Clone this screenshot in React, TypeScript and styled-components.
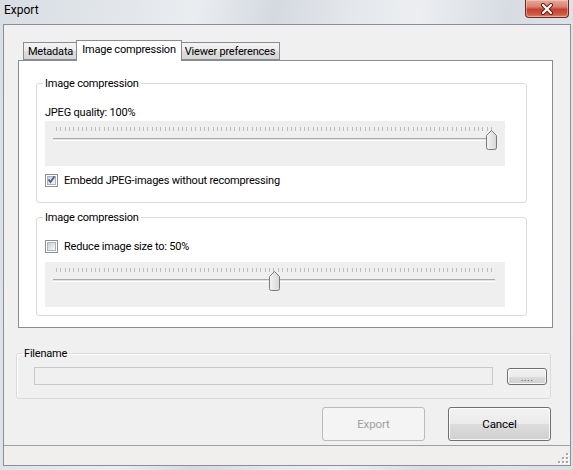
import React, { useId } from "react";
import styled, { createGlobalStyle } from "styled-components";

const GlobalStyle = createGlobalStyle`
  html, body { margin: 0; padding: 0; }
  body {
    width: 573px;
    height: 470px;
    overflow: hidden;
    font-family: Roboto, "Liberation Sans", sans-serif;
    font-size: 11px;
    letter-spacing: -0.2px;
    color: #000;
  }
`;

const Window = styled.div`
  width: 573px;
  height: 470px;
  box-sizing: border-box;
  display: flex;
  flex-direction: column;
  padding: 0 2px 4px 3px;
  background: linear-gradient(
    100deg,
    #d9dee4 0%,
    #e2e6ea 18%,
    #eaedf0 30%,
    #d5dae0 42%,
    #e5e8ec 55%,
    #eceef1 64%,
    #d7dce2 78%,
    #e0e4e8 90%,
    #dadfe5 100%
  );
`;

const TitleBar = styled.div`
  height: 24px;
  display: flex;
  align-items: flex-start;
  justify-content: space-between;
`;

const Title = styled.div`
  padding: 3px 0 0 1px;
  line-height: 15px;
  font-size: 12px;
  letter-spacing: 0;
`;

const CloseButton = styled.div`
  width: 44px;
  height: 18px;
  margin-right: 2px;
  box-sizing: border-box;
  border: 1px solid #6b2a22;
  border-top: none;
  border-radius: 0 0 4px 4px;
  background: linear-gradient(180deg, #e9a99b 0%, #d88170 40%, #c7402f 55%, #cf5a45 85%, #e08a6f 100%);
  box-shadow: inset 0 0 0 1px rgba(255, 220, 210, 0.45);
  display: flex;
  align-items: center;
  justify-content: center;
`;

const Client = styled.div`
  flex: 1;
  display: flex;
  flex-direction: column;
  background: #f0f0f0;
  border: 1px solid #8a9096;
  min-height: 0;
`;

const TabControl = styled.div`
  margin: 15px 17px 0 14px;
  display: flex;
  flex-direction: column;
`;

const TabStrip = styled.div`
  height: 20px;
  display: flex;
  align-items: flex-end;
  padding-left: 5px;
  position: relative;
  z-index: 1;
`;

const Tab = styled.div<{ $active?: boolean; $w: number }>`
  box-sizing: border-box;
  width: ${(p) => p.$w}px;
  height: ${(p) => (p.$active ? "21px" : "18px")};
  margin: ${(p) => (p.$active ? "0 -2px -1px" : "0")};
  padding-top: ${(p) => (p.$active ? "0" : "2px")};
  padding-bottom: ${(p) => (p.$active ? "2px" : "0")};
  border: 1px solid #898c95;
  border-bottom: ${(p) => (p.$active ? "none" : "1px solid #898c95")};
  background: ${(p) =>
    p.$active ? "#ffffff" : "linear-gradient(180deg, #f3f3f3 0%, #ebebeb 50%, #dddddd 51%, #d6d6d6 100%)"};
  position: relative;
  z-index: ${(p) => (p.$active ? 2 : 1)};
  line-height: 16px;
  white-space: nowrap;
  display: flex;
  align-items: center;
  justify-content: center;
`;

const TabPanel = styled.div`
  box-sizing: border-box;
  height: 268px;
  border: 1px solid #898c95;
  background: #fff;
  padding: 15px 25px 0 17px;
`;

const GroupBox = styled.fieldset<{ $top?: number; $pad: string }>`
  margin: ${(p) => p.$top ?? 0}px 0 0 0;
  padding: ${(p) => p.$pad};
  border: 1px solid #d9dcdf;
  border-radius: 3px;
  box-shadow: inset 1px 1px 0 #fff;
  min-width: 0;
`;

const Legend = styled.legend<{ $shift: number }>`
  padding: 1px 2px 0;
  margin-left: ${(p) => p.$shift}px;
  line-height: 13px;
`;

const Label = styled.div`
  line-height: 12px;
  padding-top: 2px;
`;

const CheckRow = styled.label<{ $top: number }>`
  display: flex;
  align-items: center;
  gap: 6px;
  height: 14px;
  margin-top: ${(p) => p.$top}px;
`;

const CheckText = styled.span`
  line-height: 12px;
  padding-top: 2px;
`;

const CheckBox = styled.span`
  width: 13px;
  height: 13px;
  box-sizing: border-box;
  border: 1px solid #8e8f8f;
  background: #fff;
  padding: 1px;
  flex: none;
  display: flex;
`;

const CheckInner = styled.span`
  flex: 1;
  background: linear-gradient(135deg, #cbcfd5 0%, #e4e6e9 55%, #f6f6f6 100%);
  border: 1px solid #aeb3b9;
  position: relative;
`;

const CheckMark = styled.svg`
  position: absolute;
  left: -2px;
  top: -3px;
`;

const SliderArea = styled.div<{ $top: number }>`
  position: relative;
  width: 460px;
  height: 45px;
  margin-top: ${(p) => p.$top}px;
  background: #efefef;
  overflow: hidden;
`;

const Ticks = styled.div`
  margin: 6px 0 0 11px;
  width: 436px;
  height: 4px;
  background: repeating-linear-gradient(to right, #bdbdbd 0 1px, transparent 1px 4.35px);
`;

const Track = styled.div`
  margin: 7px 0 0 8px;
  width: 442px;
  height: 3px;
  box-sizing: border-box;
  border-top: 1px solid #aaaaaa;
  border-bottom: 1px solid #ffffff;
  background: #e2e2e2;
`;

const ThumbSvg = styled.svg`
  position: absolute;
  top: 9px;
`;

const FileRow = styled.div`
  display: flex;
  align-items: flex-start;
  gap: 14px;
`;

const TextBox = styled.div`
  width: 459px;
  height: 18px;
  box-sizing: border-box;
  border: 1px solid #c9c9c9;
  background: #f0f0f0;
`;

const Button = styled.button<{ $w: number; $h: number; $top?: number; $disabled?: boolean }>`
  width: ${(p) => p.$w}px;
  height: ${(p) => p.$h}px;
  margin: ${(p) => p.$top ?? 0}px 0 0 0;
  padding: 0;
  box-sizing: border-box;
  font-family: inherit;
  font-size: 11.5px;
  letter-spacing: -0.1px;
  border-radius: 3px;
  border: 1px solid ${(p) => (p.$disabled ? "#b8bcbf" : "#707070")};
  color: ${(p) => (p.$disabled ? "#a0a0a0" : "#000")};
  background: ${(p) =>
    p.$disabled
      ? "#f4f4f4"
      : "linear-gradient(180deg, #f2f2f2 0%, #ebebeb 50%, #dddddd 51%, #cfcfcf 100%)"};
  box-shadow: ${(p) => (p.$disabled ? "none" : "inset 0 0 0 1px rgba(255,255,255,0.8)")};
  display: flex;
  align-items: center;
  justify-content: center;
`;

const DotsLabel = styled.span`
  color: #555;
  font-size: 10px;
  letter-spacing: 0.5px;
  margin-top: 2px;
`;

const ButtonRow = styled.div`
  display: flex;
  justify-content: flex-end;
  gap: 23px;
  margin: 8px 19px 0 0;
`;

const FileSection = styled.div`
  margin: 18px 19px 0 12px;
`;

const StatusBar = styled.div`
  margin-top: auto;
  height: 20px;
  box-sizing: border-box;
  border-top: 1px solid #a0a0a0;
  background: #f0efee;
  display: flex;
  justify-content: flex-end;
  align-items: flex-end;
`;

const Thumb: React.FC<{ left: number }> = ({ left }) => {
  const id = useId();
  return (
    <ThumbSvg style={{ left }} width="11" height="20" viewBox="0 0 11 20">
      <defs>
        <linearGradient id={id} x1="0" y1="0" x2="1" y2="0">
          <stop offset="0" stopColor="#f4f4f4" />
          <stop offset="1" stopColor="#d6d6d6" />
        </linearGradient>
      </defs>
      <path
        d="M5.5 0.5 L10.5 5.5 V17.5 Q10.5 19.5 8.5 19.5 H2.5 Q0.5 19.5 0.5 17.5 V5.5 Z"
        fill={`url(#${id})`}
        stroke="#7a7a7a"
      />
    </ThumbSvg>
  );
};

const Slider: React.FC<{ value: number; top: number }> = ({ value, top }) => (
  <SliderArea $top={top}>
    <Ticks />
    <Track />
    <Thumb left={Math.round(11 + (value / 100) * 435 - 5)} />
  </SliderArea>
);

const Check: React.FC<{ checked?: boolean }> = ({ checked }) => (
  <CheckBox>
    <CheckInner>
      {checked && (
        <CheckMark width="11" height="11" viewBox="0 0 11 11">
          <path d="M2.5 5.5 L4.5 8 L8.5 2.5" fill="none" stroke="#4a5f88" strokeWidth="1.8" />
        </CheckMark>
      )}
    </CheckInner>
  </CheckBox>
);

const SizeGrip = () => (
  <svg width="12" height="12" viewBox="0 0 12 12" style={{ marginRight: 1, marginBottom: 1 }}>
    {[
      [9, 1],
      [9, 5],
      [5, 5],
      [9, 9],
      [5, 9],
      [1, 9],
    ].map(([x, y], i) => (
      <g key={i}>
        <rect x={x + 1} y={y + 1} width="2" height="2" fill="#fff" />
        <rect x={x} y={y} width="2" height="2" fill="#a7a7a7" />
      </g>
    ))}
  </svg>
);

export default function App() {
  return (
    <>
      <GlobalStyle />
      <Window>
        <TitleBar>
          <Title>Export</Title>
          <CloseButton>
            <svg width="14" height="12" viewBox="0 0 14 12">
              <path d="M3 2 L11 10 M11 2 L3 10" stroke="#5a1a12" strokeWidth="4" strokeLinecap="round" />
              <path d="M3 2 L11 10 M11 2 L3 10" stroke="#ffffff" strokeWidth="2.2" strokeLinecap="round" />
            </svg>
          </CloseButton>
        </TitleBar>
        <Client>
          <TabControl>
            <TabStrip>
              <Tab $w={55}>Metadata</Tab>
              <Tab $w={106} $active>
                Image compression
              </Tab>
              <Tab $w={100}>Viewer preferences</Tab>
            </TabStrip>
            <TabPanel>
              <GroupBox $pad="15px 20px 15px 8px">
                <Legend $shift={-2}>Image compression</Legend>
                <Label>JPEG quality: 100%</Label>
                <Slider value={100} top={2} />
                <CheckRow $top={7}>
                  <Check checked />
                  <CheckText>Embedd JPEG-images without recompressing</CheckText>
                </CheckRow>
              </GroupBox>
              <GroupBox $top={7} $pad="15px 20px 8px 8px">
                <Legend $shift={-2}>Image compression</Legend>
                <CheckRow $top={0}>
                  <Check />
                  <CheckText>Reduce image size to: 50%</CheckText>
                </CheckRow>
                <Slider value={50} top={9} />
              </GroupBox>
            </TabPanel>
          </TabControl>
          <FileSection>
            <GroupBox $pad="7px 3px 13px 17px">
              <Legend $shift={-12}>Filename</Legend>
              <FileRow>
                <TextBox />
                <Button $w={40} $h={17} $top={1}>
                  <DotsLabel>....</DotsLabel>
                </Button>
              </FileRow>
            </GroupBox>
          </FileSection>
          <ButtonRow>
            <Button $w={103} $h={34} $disabled>
              Export
            </Button>
            <Button $w={103} $h={34}>
              Cancel
            </Button>
          </ButtonRow>
          <StatusBar>
            <SizeGrip />
          </StatusBar>
        </Client>
      </Window>
    </>
  );
}
